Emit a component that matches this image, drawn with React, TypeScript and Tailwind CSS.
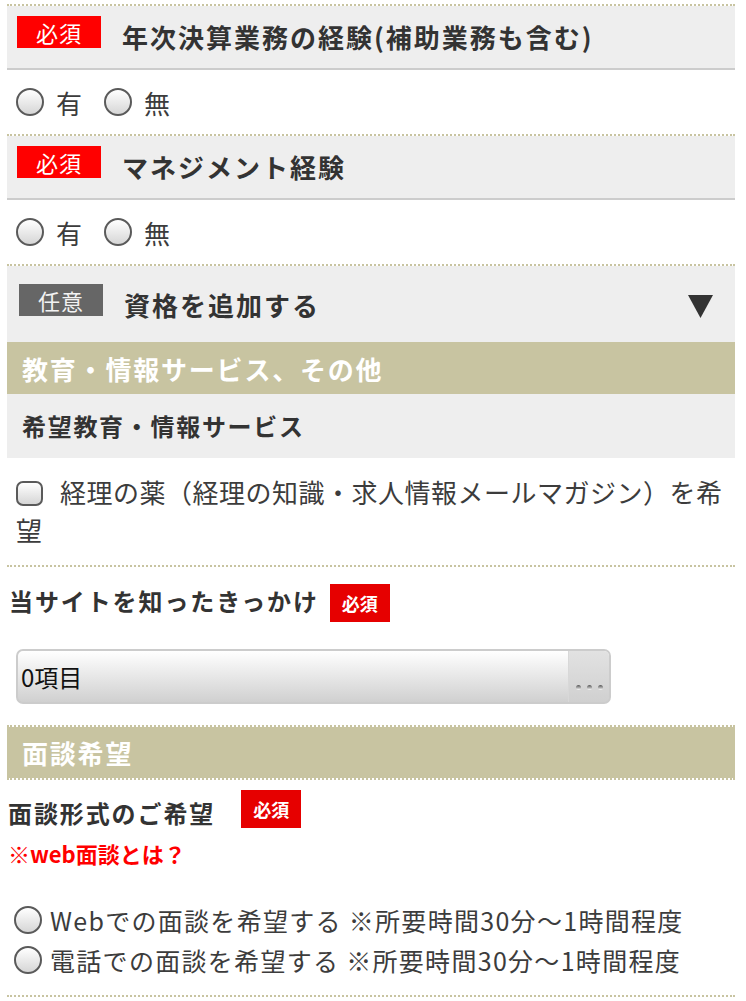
import React from "react";

const dotted = "border-t-2 border-dotted border-[#c8c4a1]";

function Radio() {
  return (
    <span className="inline-block w-[28px] h-[28px] rounded-full border-2 border-[#5a5a5a] bg-gradient-to-b from-white to-[#d6d6d6] shrink-0" />
  );
}

function BigBadge({ label, tone }: { label: string; tone: "red" | "gray" }) {
  return (
    <span
      className={
        "flex items-center justify-center w-[84px] h-[32px] text-[22px] leading-none tracking-[1px] shrink-0 " +
        (tone === "red" ? "bg-[#ff0000] text-white" : "bg-[#666666] text-[#f2f2f2]")
      }
    >
      {label}
    </span>
  );
}

function SmallBadge() {
  return (
    <span className="flex items-center justify-center w-[60px] h-[38px] bg-[#e60000] text-white text-[18px] font-bold leading-none shrink-0">
      必須
    </span>
  );
}

function YesNoBlock({ title }: { title: string }) {
  return (
    <div className={dotted}>
      <div className="h-[64px] bg-[#eeeeee] border-b-2 border-[#cccccc] flex items-start pl-[10px] pt-[10px]">
        <BigBadge label="必須" tone="red" />
        <span className="ml-[21px] mt-[1px] text-[26px] leading-[40px] font-bold tracking-[2px] text-[#333333] whitespace-nowrap">
          {title}
        </span>
      </div>
      <div className="h-[64px] flex items-center pl-[9px] text-[26px] text-[#3c3c3c]">
        <Radio />
        <span className="ml-[12px]">有</span>
        <span className="ml-[22px] flex">
          <Radio />
        </span>
        <span className="ml-[12px]">無</span>
      </div>
    </div>
  );
}

export default function App() {
  return (
    <div className="min-h-screen bg-white pt-[4px] font-['Noto_Sans_CJK_JP',sans-serif] text-[#333333]">
      <div className="ml-[7px] w-[728px]">
        <YesNoBlock title="年次決算業務の経験(補助業務も含む)" />
        <YesNoBlock title="マネジメント経験" />

        {/* 任意 */}
        <div className={dotted}>
          <div className="h-[76px] bg-[#eeeeee] flex items-center pl-[12px] pr-[22px]">
            <span className="mb-[8px] flex">
              <BigBadge label="任意" tone="gray" />
            </span>
            <span className="ml-[21px] text-[26px] font-bold tracking-[2px] text-[#333333]">資格を追加する</span>
            <svg className="ml-auto mt-[5px]" width="25" height="23" viewBox="0 0 25 23">
              <polygon points="0,0 25,0 12.5,23" fill="#333333" />
            </svg>
          </div>
        </div>

        <div className="h-[52px] bg-[#c8c4a1] flex items-center pl-[15px] text-white text-[26px] font-bold tracking-[1.8px]">
          教育・情報サービス、その他
        </div>
        <div className="h-[64px] bg-[#eeeeee] flex items-center pl-[15px] text-[24px] font-bold tracking-[1.7px] text-[#333333]">
          希望教育・情報サービス
        </div>
        <div className="pl-[9px] pr-[6px] pt-[15px] pb-[16px] text-[26px] leading-[38px] tracking-[0.5px] text-[#3c3c3c]">
          <span className="inline-block align-middle w-[27px] h-[25px] mb-[4px] mr-[17px] rounded-[7px] border-2 border-[#5a5a5a] bg-gradient-to-b from-white to-[#d6d6d6]" />
          経理の薬（経理の知識・求人情報メールマガジン）を希望
        </div>

        {/* きっかけ */}
        <div className={dotted + " pt-[17px]"}>
          <div className="h-[38px] flex items-center pl-[2px]">
            <span className="text-[24px] leading-[30px] font-bold tracking-[1.9px] mb-[4px]">当サイトを知ったきっかけ</span>
            <span className="ml-[11px] flex">
              <SmallBadge />
            </span>
          </div>
          <div className="mt-[27px] ml-[9px] w-[595px] h-[55px] rounded-[7px] border-2 border-[#cccccc] bg-gradient-to-b from-white to-[#d0d0d0] flex overflow-hidden">
            <span className="flex-1 pl-[3px] flex items-center text-[24px] text-[#111111]">0項目</span>
            <span className="w-[41px] border-l border-[#d8d8d8] bg-gradient-to-b from-[#e2e2e2] to-[#d0d0d0] flex items-end justify-center gap-[6px] pb-[12px]">
              <span className="w-[5px] h-[5px] rounded-full bg-gradient-to-b from-[#555555] to-white" />
              <span className="w-[5px] h-[5px] rounded-full bg-gradient-to-b from-[#555555] to-white" />
              <span className="w-[5px] h-[5px] rounded-full bg-gradient-to-b from-[#555555] to-white" />
            </span>
          </div>
        </div>

        {/* 面談希望 */}
        <div className="mt-[21px] h-[55px] border-y-2 border-dotted border-[#c8c4a1] bg-[#c8c4a1] bg-clip-padding flex items-center pl-[15px] text-white text-[26px] font-bold tracking-[1.8px]">
          面談希望
        </div>
        <div className="pt-[10px] pl-[1px]">
          <div className="h-[38px] flex items-center">
            <span className="text-[24px] leading-[30px] font-bold tracking-[1.9px] mt-[8px]">面談形式のご希望</span>
            <span className="ml-[26px] flex">
              <SmallBadge />
            </span>
          </div>
          <div className="mt-[10px] text-[22px] leading-[30px] font-bold text-[#ff0000]">※web面談とは？</div>
          <div className="mt-[32px] pl-[6px] pb-[15px] text-[25px] leading-[40px] tracking-[1.3px] text-[#3c3c3c]">
            <div className="h-[40px] flex items-center">
              <Radio />
              <span className="ml-[8px] whitespace-nowrap">Webでの面談を希望する ※所要時間30分〜1時間程度</span>
            </div>
            <div className="h-[40px] flex items-center">
              <Radio />
              <span className="ml-[8px] whitespace-nowrap">電話での面談を希望する ※所要時間30分〜1時間程度</span>
            </div>
          </div>
        </div>
        <div className={dotted} />
      </div>
    </div>
  );
}
